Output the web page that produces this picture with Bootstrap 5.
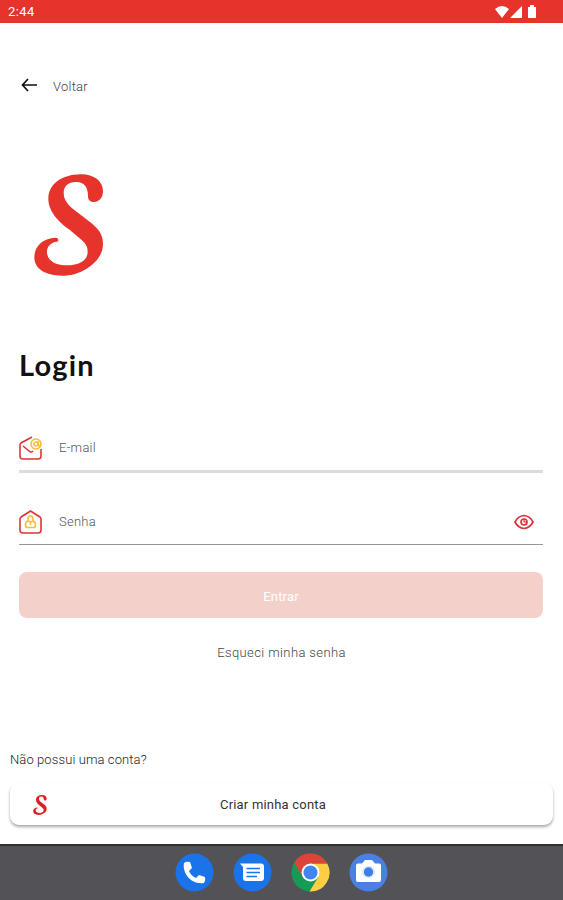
<!DOCTYPE html>
<html lang="pt-BR">
<head>
<meta charset="utf-8">
<meta name="viewport" content="width=device-width, initial-scale=1">
<title>Login</title>
<link href="https://cdn.jsdelivr.net/npm/bootstrap@5.3.0/dist/css/bootstrap.min.css" rel="stylesheet">
<style>
body{font-family:Roboto,"Liberation Sans",sans-serif;font-size:13px;line-height:20px;color:#444;height:900px;overflow:hidden;background:#fff}
svg{display:block;flex:none}
.status{height:23px;background:#e6332c;color:#fff;font-size:13px;padding:1px 26px 0 8px;letter-spacing:.45px}
.back{margin:54px 0 0 21px;font-weight:300;letter-spacing:.25px;gap:16px}
.brand{margin:77px 0 0 34px}
h1{font-family:Lato,sans-serif;font-weight:700;font-size:29px;line-height:36px;letter-spacing:1.2px;color:#111;margin:71px 0 0 19px}
.field{margin:0 20px 0 19px;height:48px;font-weight:300;color:#555;letter-spacing:.25px;border-bottom:3px solid #dcdcdc}
.field-mail{margin-top:42px}
.field-pass{margin-top:26px;height:46px;border-bottom:1px solid #929898}
.field svg:first-child{margin-right:16px}
.enter{margin:27px 20px 0 19px;height:46px;border-radius:8px;background:#f3d0ca;color:#fff;font-size:13px;letter-spacing:.2px;border:0;padding:3px 0 0}
.forgot{margin-top:25px;font-weight:300;color:#444;letter-spacing:.38px}
.ask{margin:87px 0 0 10px;font-weight:300;color:#222;letter-spacing:.1px}
.create{margin:13px 10px 0;height:42px;border-radius:9px;background:#fff;border:0;box-shadow:0 2px 3px rgba(0,0,0,.34);color:#333;font-size:13px;letter-spacing:.2px;padding:2px 0 0 23px}
.create span{padding-right:36px;margin-left:-18px}
.dock{height:56px;background:#535256;border-top:2px solid #303034;gap:19px;padding:0 1px 2px 0}
</style>
<script src="https://cdn.jsdelivr.net/npm/bootstrap@5.3.0/dist/js/bootstrap.bundle.min.js"></script>
</head>
<body class="d-flex flex-column">
<header class="status d-flex align-items-center justify-content-between">
  <span>2:44</span>
  <svg width="42" height="14" viewBox="0 0 42 14" fill="#fff"><path d="M0 4Q7-2 14 4L7 13ZM27 1V13H15ZM33 2h2V0h4v2h2v11h-8Z"/></svg>
</header>
<main class="flex-grow-1 d-flex flex-column">
  <a class="back d-flex align-items-center text-reset text-decoration-none" href="#">
    <svg class="mb-1" width="16" height="16" viewBox="0 0 16 16" fill="none" stroke="#111" stroke-width="1.7"><path d="M7 2 1.500 8 7 14M1.500 8H16"/></svg>Voltar
  </a>
  <svg class="brand" width="70" height="102" viewBox="41 40 210 306" fill="#e6332c"><path id="brand-mark" d="M180 41C219 40 248 60 248 92C248 112 236 124 220 124C208 124 203 117 203 106C203 80 192 65 169 64C144 63 130 77 130 97C130 120 147 137 165 150L205 181C233 202 248 220 248 249C248 283 225 308 199 324C177 337 154 345 125 345C76 345 42 325 42 290C42 254 71 232 105 231Q115 232 114 240C111 245 105 241 96 247C84 254 79 264 80 276C82 301 106 314 138 314C178 314 202 299 202 274C202 259 198 251 185 239L145 205C124 190 84 157 84 114C84 70 125 42 180 41Z"/></svg>
  <h1>Login</h1>
  <div class="field field-mail d-flex align-items-center">
    <svg width="24" height="26" viewBox="0 0 24 26" fill="none" stroke="#dc3539" stroke-width="1.6"><path d="M13 2 2 8Q1 9 1 10V21Q1 24 4 24H19Q22 24 22 21V14M4 11l6 5q2 2 4 0"/><g stroke="#f8bd3b"><circle cx="17" cy="9" r="5"/><circle cx="17" cy="9" r="2"/><path d="M19 6v4q2 2 3 0"/></g></svg>
    <span>E-mail</span>
  </div>
  <div class="field field-pass d-flex align-items-center">
    <svg width="24" height="26" viewBox="0 0 24 26" fill="none" stroke="#dc3539" stroke-width="1.6"><path d="M11.500 2 2 8Q1 9 1 10V21Q1 24 4 24H19Q22 24 22 21V10Q22 9 21 8Z"/><path stroke="#f8bd3b" d="M7.500 12.500h8q2 3 0 6h-8q-2-3 0-6ZM9 12V10q0-3 2.500-3t2.500 3v2M11.500 13v3"/></svg>
    <span>Senha</span>
    <svg class="ms-auto me-2" width="22" height="16" viewBox="0 0 22 16" fill="none" stroke="#d9343a" stroke-width="1.7"><path d="M2 8Q5 2 11 1.500Q17 2 20 8Q17 14 11 14.500Q5 14 2 8Z"/><circle cx="11" cy="8" r="3"/><path d="M11 5v3h3" stroke-width="1.200"/></svg>
  </div>
  <button class="enter" type="button">Entrar</button>
  <a class="forgot text-center text-decoration-none" href="#">Esqueci minha senha</a>
  <p class="ask">Não possui uma conta?</p>
  <button class="create d-flex align-items-center" type="button">
    <svg width="14" height="20" viewBox="41 40 210 306" fill="#dc1f22"><use href="#brand-mark"/></svg>
    <span class="flex-grow-1 text-center">Criar minha conta</span>
  </button>
</main>
<nav class="dock d-flex align-items-center justify-content-center">
  <svg width="39" height="39" viewBox="0 0 39 39"><circle cx="19.500" cy="19.500" r="19" fill="#1a73e8"/><path fill="#fff" d="M9 10q2-2 6-1l2 6-3 3q2 5 7 7l3-3 6 2q1 3-1 6C16 32 7 20 9 10Z"/></svg>
  <svg width="39" height="39" viewBox="0 0 39 39"><circle cx="19.500" cy="19.500" r="19" fill="#1a73e8"/><path fill="#fff" d="M7 10.500H28q3 0 3 3V25q0 3-3 3H13q-3 0-3-3V14Z"/><path stroke="#1a73e8" stroke-width="1.500" d="M13.500 15.500H27M13.500 19.500H27M13.500 23.500H24"/></svg>
  <svg width="39" height="39" viewBox="0 0 39 39"><circle cx="19.500" cy="19.500" r="19" fill="#169b57"/><path fill="#ffce43" d="M19.500 10.500H36.200A19 19 0 0 1 18.500 38.500L27.300 24Z"/><path fill="#db4437" d="M3.300 9.500A19 19 0 0 1 36.200 10.500H19.500L11.700 24Z"/><circle cx="19.500" cy="19.500" r="9" fill="#fff"/><circle cx="19.500" cy="19.500" r="7" fill="#4285f4"/></svg>
  <svg width="39" height="39" viewBox="0 0 39 39"><circle cx="19.500" cy="19.500" r="19" fill="#4a80e4"/><path fill="#fff" d="M9 10.500h4l3-3.500h7l3 3.500h4q2 0 2 2V27q0 2-2 2H9q-2 0-2-2V12.500q0-2 2-2Z"/><circle cx="19.500" cy="19" r="6.500" fill="#e4eaf4"/><circle cx="19.500" cy="19" r="4.700" fill="#3f7ee6"/></svg>
</nav>
</body>
</html>
